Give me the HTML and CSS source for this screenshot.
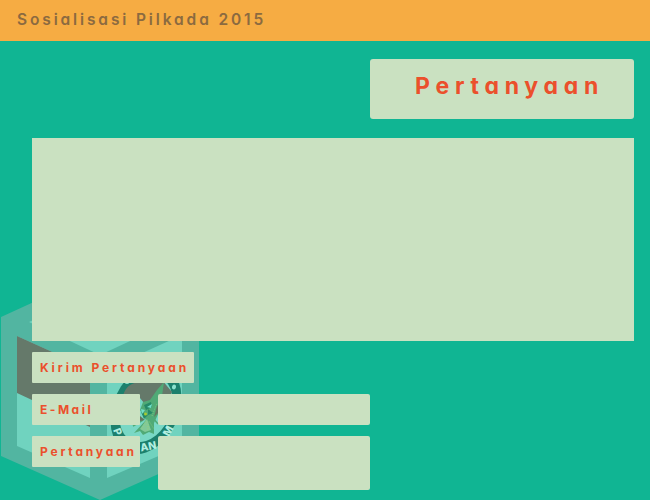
FILE: index.html
```html
<!DOCTYPE html>
<html lang="id">
<head>
<meta charset="utf-8">
<title>Sosialisasi Pilkada 2015</title>
<link rel="stylesheet" href="styles.css">
</head>
<body>
<header class="bar">Sosialisasi Pilkada 2015</header>
<main class="page">
  <svg class="emblem" viewBox="0 290 200 210" width="200" height="210" aria-hidden="true">
    <path fill="#52b5a1" d="M1 317 60 290H140L199 317V456L100 500 1 456Z"/>
    <path fill="#70d3bf" d="M29 322 100 290 171 322 100 355Z"/>
    <path fill="#70d3bf" d="M17 336 90 369V478L17 446Z"/>
    <path fill="#65796a" d="M17 336 90 369V427L17 393Z"/>
    <path fill="#70d3bf" d="M107 369 182 335V446L107 478Z"/>
    <g transform="translate(146 409) skewY(-18)">
      <ellipse rx="35.5" ry="43.5" fill="#1c806d"/>
      <ellipse rx="26.5" ry="32" fill="#79d8c5"/>
    </g>
    <text class="seal" transform="translate(113 430) rotate(68)">P</text>
    <text class="seal" transform="translate(141 451.5) rotate(-11)">AN</text>
    <text class="seal" transform="translate(169 437) rotate(-62)">M</text>
    <path fill="#65796a" d="M123 396Q126 383 140 382L162 380 172 392 167 402 158 394Q154 407 148 408L140 398Z"/>
    <path fill="#50aa76" d="M164 382 157 390 150 400 143 402 140 410 146 420 134 433 140 431 143 435 149 432 154 434 154 423 160 410Z"/>
    <path fill="none" stroke="#50aa76" stroke-width="1.5" d="M133 426 143 420M153 418 158 424"/>
    <path fill="#82c998" d="M140 429 147 419 151 430 145 432Z"/>
    <path fill="#268967" d="m144 405 7-3 1 5-6 3zM141 412l7 3-4 4zM148 409l5 4-5 2z"/>
    <path fill="#72dfc8" d="m147 407 5-3-1 4zM141 409l4 1-3 4z"/>
    <path fill="#63765f" d="m157 406 4-4-3 11-4 4zM140 416l5 4-5 1z"/>
    <path fill="none" stroke="#95d080" stroke-width=".7" stroke-dasharray="1 1.3" d="m142 429 4-9 2 10 1-9 5 8M152 416l5-13"/>
    <circle cx="145.5" cy="414" r="1.5" fill="#a8cc30"/>
    <ellipse cx="174" cy="387" rx="2" ry="2.5" fill="#8ce2cf" transform="rotate(20 174 387)"/>
    <ellipse cx="127" cy="383" rx="2" ry="1" fill="#8ce2cf"/>
  </svg>
  <h1 class="title">Pertanyaan</h1>
  <section class="board"></section>
  <form class="ask">
    <h2 class="tag heading">Kirim Pertanyaan</h2>
    <label class="tag mail" for="mail">E-Mail</label>
    <input class="field" id="mail" type="text">
    <label class="tag question" for="question">Pertanyaan</label>
    <textarea class="field area" id="question"></textarea>
  </form>
</main>
</body>
</html>
```
FILE: styles.css
```css
* { box-sizing: border-box; }
body {
  margin: 0;
  height: 500px;
  overflow: hidden;
  background: #10b593;
  color: #eb502c;
  font-family: Inter, Lato, "Liberation Sans", sans-serif;
  font-feature-settings: "cv11";
}
.bar {
  height: 41px;
  padding-left: 17px;
  background: #f6ac43;
  color: #8b6a40;
  font-size: 15.5px;
  font-weight: 600;
  line-height: 39px;
  letter-spacing: 2.87px;
  white-space: nowrap;
}
.page {
  position: relative;
  height: 459px;
  padding: 18px 16px 0 32px;
}
.emblem { position: absolute; left: 0; bottom: 0; }
.title {
  width: 264px;
  height: 60px;
  margin: 0 0 19px auto;
  padding-left: 45px;
  border-radius: 3px;
  background: #cae1c1;
  font-size: 23px;
  font-weight: 700;
  line-height: 54px;
  letter-spacing: 5.75px;
  white-space: nowrap;
}
.board {
  position: relative;
  height: 203px;
  background: #cae1c1;
}
.ask {
  position: relative;
  display: grid;
  grid-template-columns: 108px 212px;
  column-gap: 18px;
  row-gap: 11px;
  align-items: start;
  margin-top: 11px;
}
.tag {
  height: 31px;
  margin: 0;
  padding-left: 8px;
  border-radius: 1px;
  background: #cae1c1;
  font-size: 12px;
  font-weight: 650;
  line-height: 31px;
  letter-spacing: 2.8px;
  white-space: nowrap;
}
.heading {
  grid-column: 1 / -1;
  width: 162px;
  letter-spacing: 2.9px;
}
.mail { letter-spacing: 2.5px; }
.field {
  display: block;
  width: 212px;
  height: 31px;
  padding: 6px;
  border: 0;
  border-radius: 2px;
  outline: 0;
  background: #cae1c1;
  color: inherit;
  font: inherit;
}
.area { height: 54px; resize: none; }
.seal {
  fill: #b2eee0;
  font-size: 10.5px;
  font-weight: 800;
}
```
